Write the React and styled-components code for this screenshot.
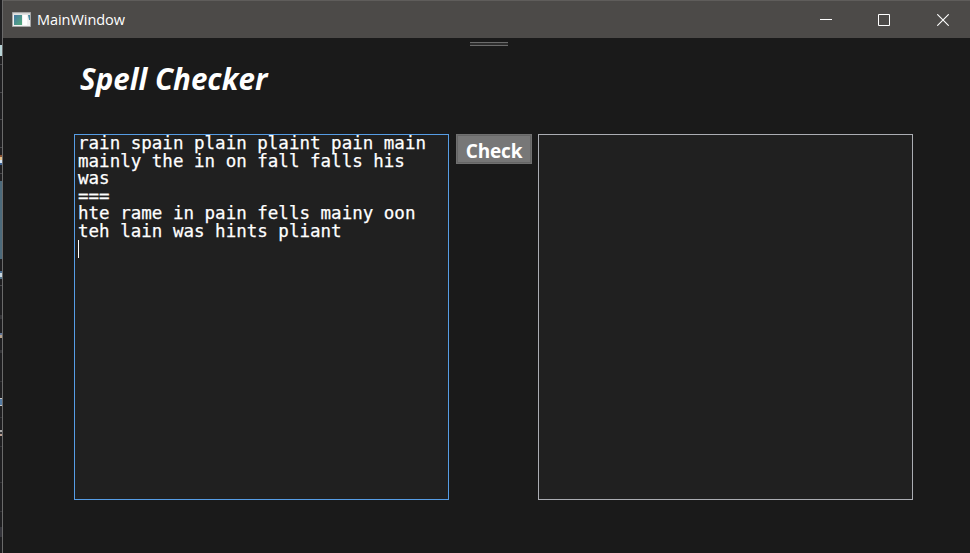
import React from "react";
import styled, { createGlobalStyle } from "styled-components";

const GlobalStyle = createGlobalStyle`
  * { box-sizing: border-box; }
  body { margin: 0; background: #1a1a1a; overflow: hidden; }
`;

const Desktop = styled.div`
  display: flex;
  width: 970px;
  height: 553px;
  background: #1a1a1a;
`;

const Backdrop = styled.div`
  width: 2px;
  height: 553px;
  flex: none;
  display: flex;
  flex-direction: column;
  overflow: hidden;
  background: #1e1e20;
`;

const Strip = styled.div`
  flex: none;
  height: ${(p) => p.$h}px;
  background: ${(p) => p.$c || "transparent"};
`;

const Window = styled.div`
  flex: 1;
  display: flex;
  flex-direction: column;
  border-left: 1px solid #6a6a6a;
`;

const TitleBar = styled.header`
  height: 38px;
  flex: none;
  display: flex;
  align-items: center;
  background: #4c4a48;
  border-top: 1px solid #5f5d5b;
  padding-left: 9px;
`;

const TitleText = styled.span`
  margin-left: 6px;
  flex: 1;
  font: 14.5px/20px "Open Sans", sans-serif;
  letter-spacing: -0.05px;
  color: #fff;
  padding-top: 1px;
`;

const WindowButton = styled.button`
  width: ${(p) => p.$w || 58}px;
  height: 36px;
  padding: 0;
  border: 0;
  background: none;
  display: flex;
  align-items: center;
  justify-content: center;
`;

const WindowControls = styled.div`
  display: flex;
  margin-right: -3px;
`;

const Grip = styled.div`
  width: 38px;
  height: 4px;
  margin: 4px 0 0 467px;
  background: #2d2d2d;
  border-top: 1px solid #6b6b6b;
  border-bottom: 1px solid #6b6b6b;
`;

const Heading = styled.h1`
  margin: 13px 0 0 77px;
  height: 40px;
  font: italic 700 29.5px/40px "Open Sans", sans-serif;
  letter-spacing: 0.03px;
  white-space: nowrap;
  color: #fff;
`;

const Content = styled.main`
  display: flex;
  align-items: flex-start;
  margin: 35px 0 0 71px;
`;

const TextPane = styled.div`
  width: 375px;
  height: 366px;
  padding: 0 3px;
  background: #202020;
  border: 1px solid ${(p) => (p.$focused ? "#569de5" : "#abadb3")};
  color: #fff;
  font: 17.53px/17.6px "DejaVu Sans Mono", monospace;
  -webkit-text-stroke: 0.25px #fff;
  white-space: pre;
`;

const Caret = styled.span`
  display: block;
  width: 1px;
  height: 18px;
  margin-top: -1px;
  background: #fff;
`;

const CheckButton = styled.button`
  width: 76px;
  height: 30px;
  margin: 0 6px 0 7px;
  padding: 2px 0 0;
  border: 2px solid #707070;
  outline: 1px solid #656565;
  outline-offset: -2px;
  background: #777;
  color: #fff;
  font: 700 19px/26px "Open Sans", sans-serif;
  letter-spacing: -0.15px;
`;

const strips = [
  [45], [11, "#b9d5d8"], [8], [1, "#47474a"], [27], [1, "#47474a"],
  [26], [1, "#47474a"], [27], [1, "#47474a"], [7], [2, "#8b5230"],
  [3, "#e5c28f"], [3, "#d5e3f2"], [2, "#395e90"], [8], [1, "#47474a"],
  [7], [78, "#4c6a7b"], [12], [2, "#496d91"], [4, "#c6d6df"],
  [2, "#55738a"], [6], [1, "#47474a"], [29], [4, "#343437"], [14],
  [2, "#62779a"], [3, "#b4a08c"], [12], [3, "#343437"], [28],
  [1, "#343437"], [16], [1, "#c8c8c8"], [6, "#547ca5"], [1, "#c8c8c8"],
  [11], [1, "#343437"], [12], [2, "#aaa"], [2, "#343437"], [2, "#bba092"],
  [10], [1, "#343437"], [35], [1, "#343437"], [28], [1, "#343437"],
  [15], [10, "#34343a"],
];

const inputText = `rain spain plain plaint pain main
mainly the in on fall falls his
was
===
hte rame in pain fells mainy oon
teh lain was hints pliant`;

function AppIcon() {
  return (
    <svg width="19" height="16" viewBox="0 0 19 16">
      <defs>
        <linearGradient id="pane" x1="0" y1="0" x2="1" y2="1">
          <stop offset="0" stopColor="#4678a5" />
          <stop offset="1" stopColor="#54ac79" />
        </linearGradient>
      </defs>
      <path d="M.5 .5h18v14H.5z" fill="#f1f1f1" stroke="#a8a8a8" />
      <path d="M1 1h17v1.5H1z" fill="#d5d5d5" />
      <path d="M2 3h8v10H2z" fill="url(#pane)" />
      <path d="M11 3h4v10h-4z" fill="#fff" />
      <path d="M16 3h2v5h-1z" fill="#4c8aa0" />
    </svg>
  );
}

function App() {
  return (
    <>
      <GlobalStyle />
      <Desktop>
        <Backdrop>
          {strips.map(([h, c], i) => (
            <Strip key={i} $h={h} $c={c} />
          ))}
        </Backdrop>
        <Window>
          <TitleBar>
            <AppIcon />
            <TitleText>MainWindow</TitleText>
            <WindowControls>
              <WindowButton aria-label="Minimize">
                <svg width="12" height="12">
                  <path d="M0 5.5h12" stroke="#fff" />
                </svg>
              </WindowButton>
              <WindowButton aria-label="Maximize">
                <svg width="12" height="12">
                  <path d="M.5 .5h11v11H.5z" fill="none" stroke="#fff" />
                </svg>
              </WindowButton>
              <WindowButton aria-label="Close" $w={60}>
                <svg width="12" height="12">
                  <path d="M.3 .3l11.4 11.4M11.7 .3L.3 11.7" stroke="#fff" strokeWidth="1.1" />
                </svg>
              </WindowButton>
            </WindowControls>
          </TitleBar>
          <Grip />
          <Heading>Spell Checker</Heading>
          <Content>
            <TextPane $focused>
              {inputText}
              <Caret />
            </TextPane>
            <CheckButton>Check</CheckButton>
            <TextPane />
          </Content>
        </Window>
      </Desktop>
    </>
  );
}

export default App;
